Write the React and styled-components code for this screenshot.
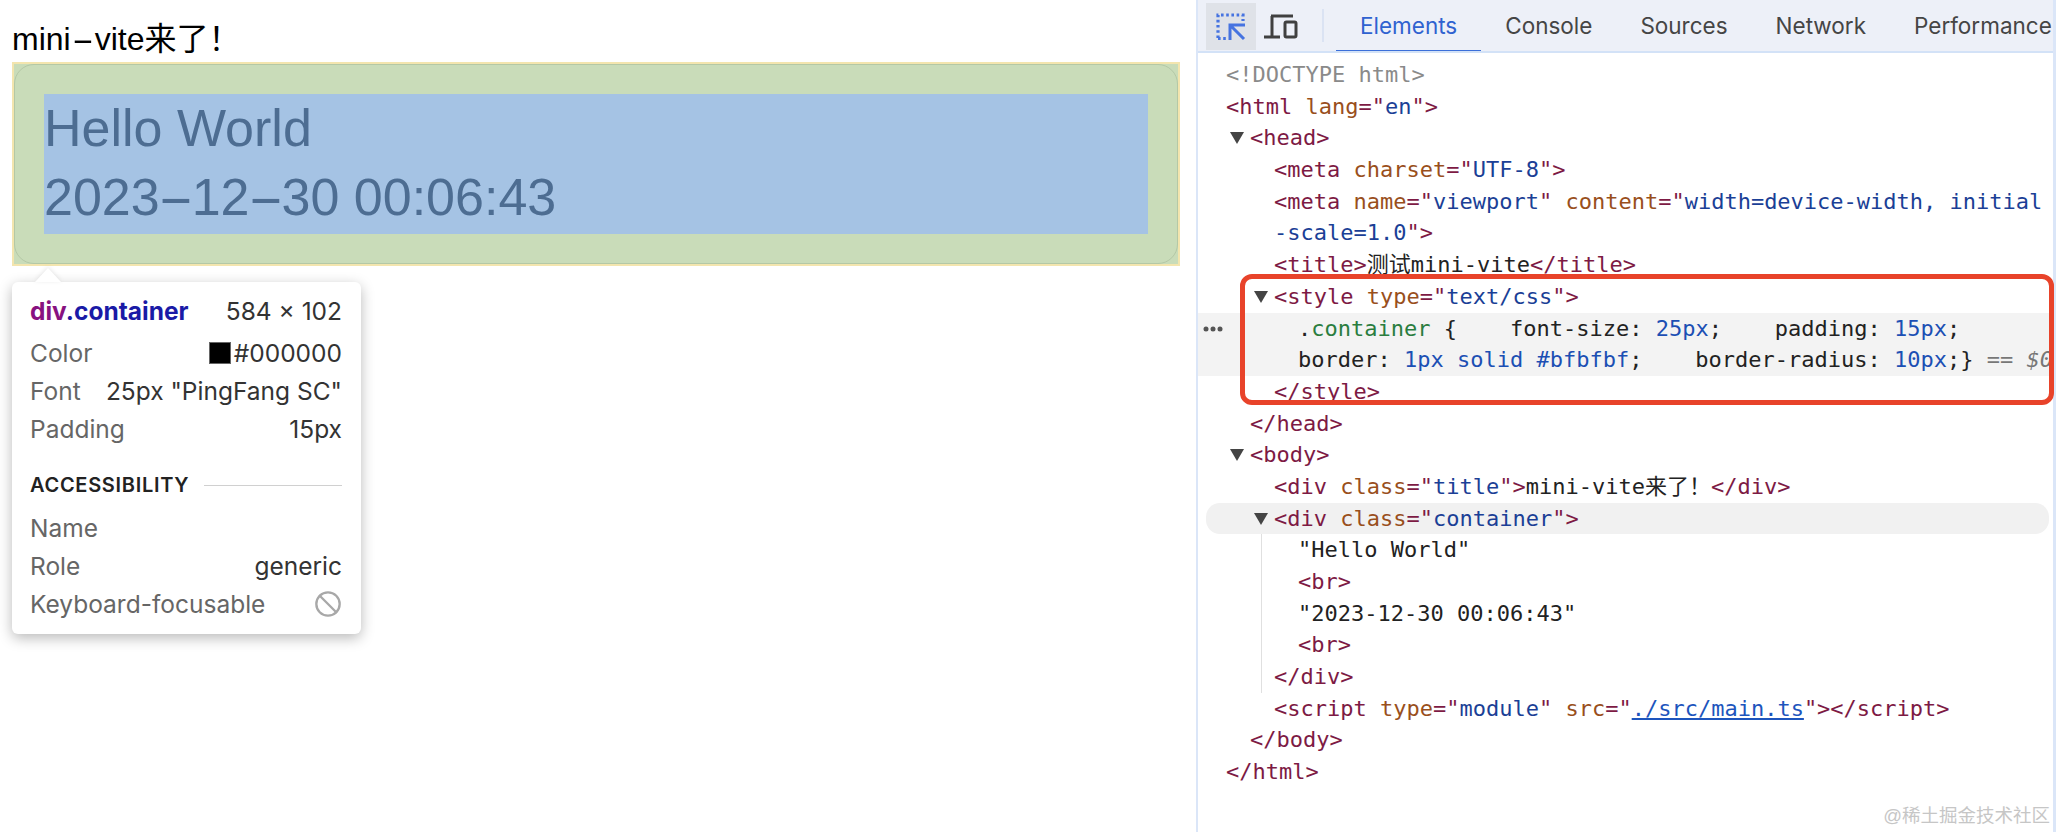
import React from "react";
import styled, { createGlobalStyle } from "styled-components";
import { Ban } from "lucide-react";

const GlobalStyle = createGlobalStyle`
  html, body {
    margin: 0;
    padding: 0;
    background: #fff;
    overflow: hidden;
  }
`;

const SANS = `"Liberation Sans", "Noto Sans CJK SC", sans-serif`;
const UI = `Inter, "Liberation Sans", sans-serif`;
const MONO = `"DejaVu Sans Mono", "Noto Sans CJK SC", monospace`;

const Page = styled.div`
  display: flex;
  width: 2056px;
  height: 832px;
  overflow: hidden;
`;

const Viewport = styled.main`
  position: relative;
  width: 1196px;
  flex: none;
  padding: 0 16px 0 12px;
  box-sizing: border-box;
  font-family: ${SANS};
  color: #000;
`;

const Title = styled.div`
  height: 62px;
  padding-top: 20px;
  box-sizing: border-box;
  font-size: 32px;
  line-height: 38px;
  white-space: pre;
`;

const Dash = styled.span`
  display: inline-block;
  width: ${(p) => p.$w}px;
  text-align: center;
  transform: scaleX(2.1);
`;

const Highlight = styled.div`
  position: relative;
  height: 204px;
  box-sizing: border-box;
  padding: 32px;
  background: #c9dcb9;
  border: 2px solid #f3e5ae;
  &::after {
    content: "";
    position: absolute;
    inset: 0;
    border: 1px solid #b4c8a6;
    border-radius: 20px;
  }
`;

const Content = styled.div`
  margin: -2px;
  height: 140px;
  background: #a5c3e4;
  color: #4d6d92;
  font-size: 52px;
  line-height: 69px;
  white-space: pre;
`;

const Tooltip = styled.aside`
  position: absolute;
  left: 12px;
  top: 282px;
  width: 349px;
  height: 352px;
  box-sizing: border-box;
  padding: 10px 19px 0 18px;
  background: #fff;
  border-radius: 6px;
  box-shadow: 0 4px 14px rgba(0, 0, 0, 0.28);
  font-family: ${UI};
  font-size: 24.5px;
  &::before {
    content: "";
    position: absolute;
    left: 23px;
    top: -14px;
    border-left: 13px solid transparent;
    border-right: 13px solid transparent;
    border-bottom: 14px solid #fff;
    filter: drop-shadow(0 -1px 2px rgba(0, 0, 0, 0.1));
  }
`;

const TipRow = styled.div`
  display: flex;
  justify-content: space-between;
  align-items: center;
  height: 38px;
  color: #666;
  white-space: pre;
`;

const TipHeader = styled(TipRow)`
  margin-bottom: 4px;
`;

const TipValue = styled.span`
  display: flex;
  align-items: center;
  gap: 3px;
  color: #333;
`;

const TipName = styled.span`
  font-weight: 700;
  color: #1a1aa6;
`;

const TipTag = styled.span`
  color: #881280;
`;

const Swatch = styled.span`
  width: 20px;
  height: 20px;
  background: #000;
  border: 1px solid #666;
`;

const SectionHead = styled.div`
  display: flex;
  align-items: center;
  gap: 15px;
  height: 38px;
  margin: 18px 0 5px;
  font-size: 20px;
  font-weight: 600;
  letter-spacing: 0.7px;
  color: #222;
  &::after {
    content: "";
    flex: 1;
    height: 1px;
    background: #d0d0d0;
  }
`;

const DevTools = styled.section`
  position: relative;
  flex: 1;
  min-width: 0;
  box-sizing: border-box;
  border-left: 2px solid #dbe6f8;
  border-right: 3px solid #dbe6f8;
`;

const Toolbar = styled.div`
  display: flex;
  align-items: stretch;
  height: 53px;
  box-sizing: border-box;
  padding-left: 8px;
  background: #edf0f8;
  border-bottom: 2px solid #d3e2f7;
  font-family: ${UI};
  font-size: 22.5px;
  color: #454545;
  overflow: hidden;
`;

const ToolButton = styled.div`
  display: flex;
  flex: none;
  align-items: center;
  justify-content: center;
  width: 50px;
  margin: 3px 0 1px;
  background: ${(p) => (p.$active ? "#dfe2e8" : "transparent")};
`;

const ToolDivider = styled.div`
  flex: none;
  width: 2px;
  margin: 9px 12px 9px 16px;
  background: #dbe3f3;
`;

const Tab = styled.div`
  display: flex;
  align-items: center;
  flex: none;
  padding: 0 24px;
  margin-bottom: -2px;
  height: 53px;
  box-sizing: border-box;
  color: ${(p) => (p.$active ? "#2f62d0" : "inherit")};
  border-bottom: 3px solid ${(p) => (p.$active ? "#3b6fd9" : "transparent")};
`;

const Tree = styled.div`
  padding-top: 6px;
  font-family: ${MONO};
  font-size: 22px;
  line-height: 31.7px;
  color: #222;
`;

const Row = styled.div`
  position: relative;
  height: 31.7px;
  padding-left: ${(p) => p.$indent}px;
  white-space: pre;
  overflow: hidden;
  isolation: isolate;
  background: ${(p) => (p.$selected ? "#f3f3f3" : "transparent")};
  ${(p) =>
    p.$open &&
    `&::before {
      content: "";
      position: absolute;
      left: ${p.$indent - 20}px;
      top: 10px;
      border-left: 7.5px solid transparent;
      border-right: 7.5px solid transparent;
      border-top: 12px solid #444;
    }`}
  ${(p) =>
    p.$hover &&
    `&::after {
      content: "";
      position: absolute;
      z-index: -1;
      left: 8px;
      right: 4px;
      top: 0;
      bottom: 0;
      border-radius: 14px;
      background: #f1f1f1;
    }`}
`;

const Children = styled.div`
  position: relative;
  &::before {
    content: "";
    position: absolute;
    left: 63px;
    top: 0;
    bottom: 0;
    width: 1px;
    background: #e0e0e0;
  }
`;

const Tag = styled.span`
  color: #7d1a44;
`;
const Attr = styled.span`
  color: #994f1c;
`;
const Val = styled.span`
  color: #1b3f96;
`;
const Link = styled.span`
  color: #1d55bd;
  text-decoration: underline;
`;
const Gray = styled.span`
  color: #8a8a8a;
`;
const CssName = styled.span`
  color: #2a7d3f;
`;
const CssNum = styled.span`
  color: #1c4fb4;
`;
const Reveal = styled.span`
  color: #777;
  i {
    font-style: italic;
  }
`;

const Dots = styled.svg`
  position: absolute;
  left: 5px;
  top: 13px;
`;

// red annotation drawn over the screenshot
const Annotation = styled.div`
  position: absolute;
  left: 42px;
  top: 274px;
  right: -1px;
  height: 131px;
  box-sizing: border-box;
  border: 5px solid #e8432a;
  border-radius: 12px;
  pointer-events: none;
`;

const Watermark = styled.div`
  position: absolute;
  right: 3px;
  bottom: 3px;
  font-family: ${SANS};
  font-size: 18.5px;
  line-height: 26px;
  color: #c6c6c6;
`;

const InspectIcon = () => (
  <svg width="30" height="30" viewBox="0 0 30 30" fill="none" stroke="#4673e0">
    <path d="M2 26V3H27V9" strokeWidth="3.2" strokeDasharray="2.6 2.6" />
    <path d="M2 26.5H10" strokeWidth="3.2" strokeDasharray="2.6 2.6" />
    <path d="M14 28V13H29M15 14L28 27" strokeWidth="3" />
  </svg>
);

const DeviceIcon = () => (
  <svg width="36" height="26" viewBox="0 0 36 26" fill="none" stroke="#404040" strokeWidth="3">
    <path d="M8 2H30M9 2V22M1 23H17" />
    <rect x="22" y="8" width="11" height="15" rx="1.5" />
  </svg>
);

const Html = ({ children }) => <Tag>{children}</Tag>;

const App = () => {
  return (
    <Page>
      <GlobalStyle />
      <Viewport>
        <Title>
          mini<Dash $w={24}>-</Dash>vite来了！
        </Title>
        <Highlight>
          <Content>
            Hello World
            <br />
            2023<Dash $w={32}>-</Dash>12<Dash $w={32}>-</Dash>30 00:06:43
          </Content>
        </Highlight>
        <Tooltip>
          <TipHeader>
            <TipName>
              <TipTag>div</TipTag>.container
            </TipName>
            <TipValue>584 × 102</TipValue>
          </TipHeader>
          <TipRow>
            Color
            <TipValue>
              <Swatch />
              #000000
            </TipValue>
          </TipRow>
          <TipRow>
            Font
            <TipValue>25px "PingFang SC"</TipValue>
          </TipRow>
          <TipRow>
            Padding
            <TipValue>15px</TipValue>
          </TipRow>
          <SectionHead>ACCESSIBILITY</SectionHead>
          <TipRow>Name</TipRow>
          <TipRow>
            Role
            <TipValue>generic</TipValue>
          </TipRow>
          <TipRow>
            Keyboard-focusable
            <Ban size={28} color="#a8a8a8" strokeWidth={2} />
          </TipRow>
        </Tooltip>
      </Viewport>
      <DevTools>
        <Toolbar>
          <ToolButton $active>
            <InspectIcon />
          </ToolButton>
          <ToolButton>
            <DeviceIcon />
          </ToolButton>
          <ToolDivider />
          <Tab $active>Elements</Tab>
          <Tab>Console</Tab>
          <Tab>Sources</Tab>
          <Tab>Network</Tab>
          <Tab>Performance</Tab>
        </Toolbar>
        <Tree>
          <Row $indent={28}>
            <Gray>{"<!DOCTYPE html>"}</Gray>
          </Row>
          <Row $indent={28}>
            <Html>{"<html "}</Html>
            <Attr>lang</Attr>
            <Html>=</Html>
            <Html>"</Html>
            <Val>en</Val>
            <Html>{'">'}</Html>
          </Row>
          <Row $indent={52} $open>
            <Html>{"<head>"}</Html>
          </Row>
          <Row $indent={76}>
            <Html>{"<meta "}</Html>
            <Attr>charset</Attr>
            <Html>="</Html>
            <Val>UTF-8</Val>
            <Html>{'">'}</Html>
          </Row>
          <Row $indent={76}>
            <Html>{"<meta "}</Html>
            <Attr>name</Attr>
            <Html>="</Html>
            <Val>viewport</Val>
            <Html>" </Html>
            <Attr>content</Attr>
            <Html>="</Html>
            <Val>width=device-width, initial</Val>
          </Row>
          <Row $indent={76}>
            <Val>-scale=1.0</Val>
            <Html>{'">'}</Html>
          </Row>
          <Row $indent={76}>
            <Html>{"<title>"}</Html>测试mini-vite<Html>{"</title>"}</Html>
          </Row>
          <Row $indent={76} $open>
            <Html>{"<style "}</Html>
            <Attr>type</Attr>
            <Html>="</Html>
            <Val>text/css</Val>
            <Html>{'">'}</Html>
          </Row>
          <Row $indent={100} $selected>
            .<CssName>container</CssName> {"{    font-size: "}
            <CssNum>25px</CssNum>
            {";    padding: "}
            <CssNum>15px</CssNum>;
            <Dots width="20" height="6" viewBox="0 0 20 6" fill="#555">
              <circle cx="3" cy="3" r="2.5" />
              <circle cx="10" cy="3" r="2.5" />
              <circle cx="17" cy="3" r="2.5" />
            </Dots>
          </Row>
          <Row $indent={100} $selected>
            {"border: "}
            <CssNum>1px solid #bfbfbf</CssNum>
            {";    border-radius: "}
            <CssNum>10px</CssNum>
            {";} "}
            <Reveal>
              == <i>$0</i>
            </Reveal>
          </Row>
          <Row $indent={76}>
            <Html>{"</style>"}</Html>
          </Row>
          <Row $indent={52}>
            <Html>{"</head>"}</Html>
          </Row>
          <Row $indent={52} $open>
            <Html>{"<body>"}</Html>
          </Row>
          <Row $indent={76}>
            <Html>{"<div "}</Html>
            <Attr>class</Attr>
            <Html>="</Html>
            <Val>title</Val>
            <Html>{'">'}</Html>mini-vite来了！<Html>{"</div>"}</Html>
          </Row>
          <Row $indent={76} $open $hover>
            <Html>{"<div "}</Html>
            <Attr>class</Attr>
            <Html>="</Html>
            <Val>container</Val>
            <Html>{'">'}</Html>
          </Row>
          <Children>
            <Row $indent={100}>"Hello World"</Row>
            <Row $indent={100}>
              <Html>{"<br>"}</Html>
            </Row>
            <Row $indent={100}>"2023-12-30 00:06:43"</Row>
            <Row $indent={100}>
              <Html>{"<br>"}</Html>
            </Row>
            <Row $indent={76}>
              <Html>{"</div>"}</Html>
            </Row>
          </Children>
          <Row $indent={76}>
            <Html>{"<script "}</Html>
            <Attr>type</Attr>
            <Html>="</Html>
            <Val>module</Val>
            <Html>" </Html>
            <Attr>src</Attr>
            <Html>="</Html>
            <Link>./src/main.ts</Link>
            <Html>{'"></script>'}</Html>
          </Row>
          <Row $indent={52}>
            <Html>{"</body>"}</Html>
          </Row>
          <Row $indent={28}>
            <Html>{"</html>"}</Html>
          </Row>
        </Tree>
        <Annotation />
        <Watermark>@稀土掘金技术社区</Watermark>
      </DevTools>
    </Page>
  );
};

export default App;
